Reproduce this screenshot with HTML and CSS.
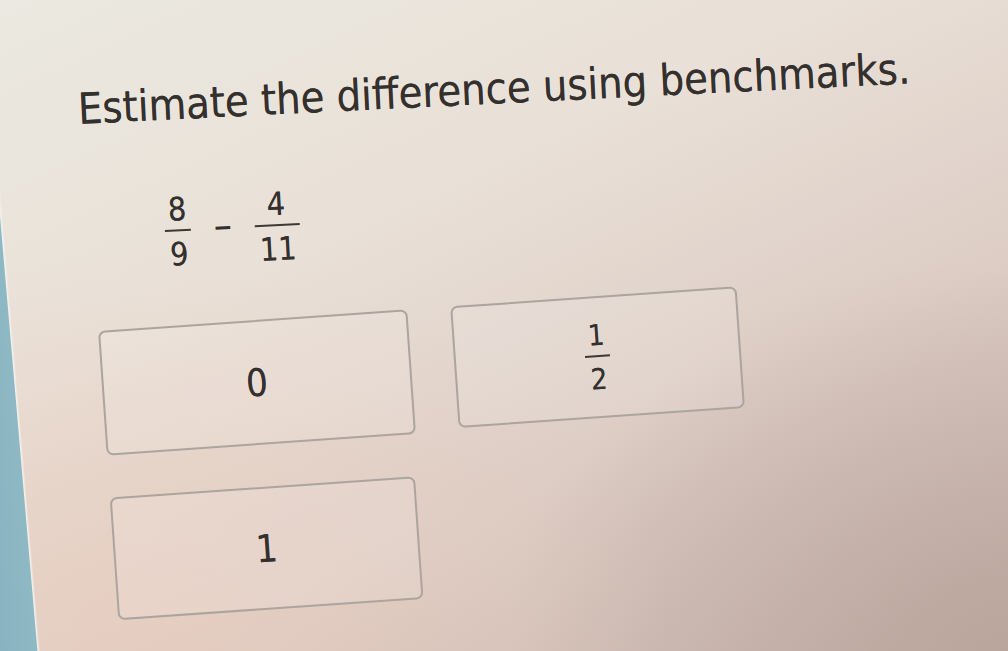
FILE: index.html
```html
<!DOCTYPE html>
<html lang="en">
<head>
<meta charset="utf-8">
<title>Estimate the difference</title>
<link rel="stylesheet" href="styles.css">
</head>
<body>
<main class="screen">
  <h1 class="prompt">Estimate the difference using benchmarks.</h1>
  <div class="expr">
    <span class="frac"><span class="num">8</span><span class="bar"></span><span class="den">9</span></span>
    <span class="minus">−</span>
    <span class="frac"><span class="num">4</span><span class="bar"></span><span class="den">11</span></span>
  </div>
  <div class="choices">
    <button class="choice c-zero" type="button"><span class="val">0</span></button>
    <button class="choice c-half" type="button"><span class="frac small"><span class="num">1</span><span class="bar"></span><span class="den">2</span></span></button>
    <button class="choice c-one" type="button"><span class="val">1</span></button>
  </div>
</main>
</body>
</html>
```

FILE: styles.css
```css
html, body {
  margin: 0;
  padding: 0;
}

body {
  width: 1008px;
  height: 651px;
  overflow: hidden;
  font-family: "DejaVu Sans Condensed", "DejaVu Sans", Verdana, sans-serif;
  color: #34302e;
}

.screen {
  box-sizing: border-box;
  width: 1008px;
  height: 651px;
  padding: 0 0 0 78px;
  display: flex;
  flex-direction: column;
  align-items: flex-start;
  background:
    linear-gradient(85.08deg, #8ab3c1 0, #8fb8c5 36.8px, #f4f1ec 37.8px, rgba(244, 241, 236, 0) 40px),
    radial-gradient(ellipse 55% 55% at 12% 95%, rgba(236, 204, 188, 0.55), rgba(236, 204, 188, 0)),
    radial-gradient(ellipse 50% 60% at 100% 100%, rgba(180, 158, 150, 0.7), rgba(180, 158, 150, 0)),
    linear-gradient(155deg, #ebe9e1 0%, #e9e0d7 35%, #ddcdc5 65%, #c8b4ac 100%);
}

.prompt {
  margin: 88px 0 0;
  font-size: 43px;
  font-weight: normal;
  line-height: 1;
  white-space: nowrap;
  text-shadow: 0 0 0.6px rgba(52, 48, 46, 0.8);
  transform-origin: 0 50%;
  transform: rotate(-2.8deg);
}

.expr {
  margin: 63px 0 0 87px;
  display: flex;
  align-items: center;
  gap: 22px;
  transform-origin: 0 50%;
  transform: rotate(-3deg);
}

.frac {
  display: inline-flex;
  flex-direction: column;
  align-items: stretch;
  font-size: 32px;
  line-height: 1;
  text-align: center;
  text-shadow: 0 0 0.5px rgba(52, 48, 46, 0.8);
}

.frac .num,
.frac .den {
  padding: 0 4px;
}

.frac .bar {
  height: 2px;
  margin: 4px 0 7px;
  background: #3c3836;
}

.minus {
  font-size: 26px;
  font-weight: bold;
  line-height: 1;
  margin-top: -6px;
}

.choices {
  margin: 49px 0 0 24px;
  display: grid;
  grid-template-columns: 310px 287px;
  column-gap: 43px;
  row-gap: 42px;
  align-items: start;
  transform-origin: 155px 62.5px;
  transform: rotate(-4deg);
}

.choice {
  box-sizing: border-box;
  display: flex;
  align-items: center;
  justify-content: center;
  padding: 0;
  border: 2px solid #aca49f;
  border-radius: 7px;
  background: rgba(255, 255, 255, 0.12);
  font-family: inherit;
  color: inherit;
}

.c-zero {
  height: 125px;
}

.c-half {
  height: 122px;
}

.c-half .frac {
  font-size: 29px;
}

.c-half .bar {
  margin: 5px 0 8px;
}

.c-one {
  width: 306px;
  height: 123px;
}

.val {
  font-size: 38px;
  line-height: 1;
  text-shadow: 0 0 0.5px rgba(52, 48, 46, 0.8);
}
```
